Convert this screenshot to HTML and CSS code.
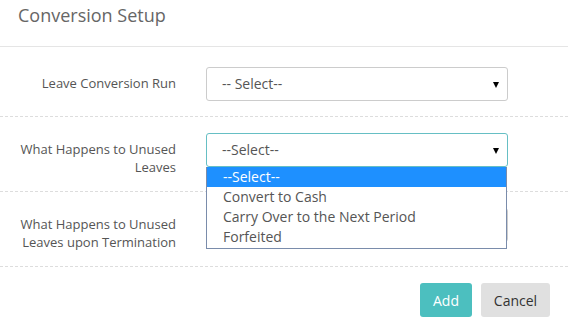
FILE: index.html
```html
<!DOCTYPE html>
<html lang="en">
<head>
    <meta charset="UTF-8">
    <meta name="viewport" content="width=device-width, initial-scale=1.0">
    <title>Conversion Setup</title>
    <link rel="stylesheet" href="styles.css">
</head>
<body>
    <div class="modal">
        <div class="modal-header">
            <h3>Conversion Setup</h3>
        </div>
        <div class="modal-body">
            <div class="form-row">
                <label class="control-label">Leave Conversion Run</label>
                <div class="control">
                    <div class="select">-- Select--<span class="caret"></span></div>
                </div>
            </div>
            <div class="form-row">
                <label class="control-label">What Happens to Unused Leaves</label>
                <div class="control">
                    <div class="select focused">--Select--<span class="caret"></span></div>
                    <ul class="dropdown">
                        <li class="active">--Select--</li>
                        <li>Convert to Cash</li>
                        <li>Carry Over to the Next Period</li>
                        <li>Forfeited</li>
                    </ul>
                </div>
            </div>
            <div class="form-row">
                <label class="control-label">What Happens to Unused Leaves upon Termination</label>
                <div class="control">
                    <!-- covered by the open dropdown above -->
                    <div class="select"><span class="caret"></span></div>
                </div>
            </div>
        </div>
        <div class="modal-footer">
            <button class="btn btn-add">Add</button>
            <button class="btn btn-cancel">Cancel</button>
        </div>
    </div>
</body>
</html>
```

FILE: styles.css
```css
body {
    margin: 0;
    background: #fff;
    font-family: "Open Sans", "Liberation Sans", sans-serif;
    color: #555;
}
.modal {
    width: 568px;
}
.modal-header {
    height: 47px;
    border-bottom: 1px solid #e5e5e5;
    padding: 0 18px;
    box-sizing: border-box;
}
.modal-header h3 {
    margin: 0;
    padding-top: 1px;
    font-size: 18px;
    font-weight: 400;
    line-height: 28px;
    color: #666;
}
.modal-body {
    padding-top: 20px;
}
.form-row {
    display: grid;
    grid-template-columns: 191px 302px;
    column-gap: 15px;
    padding: 0 0 15px;
    margin-bottom: 16px;
    border-bottom: 1px dashed #ddd;
}
.control-label {
    padding: 7px 15px 0 0;
    text-align: right;
    font-size: 13px;
    line-height: 18px;
    color: #555;
}
.control {
    position: relative;
}
.select {
    position: relative;
    height: 34px;
    box-sizing: border-box;
    border: 1px solid #ccc;
    border-radius: 3px;
    padding: 0 15px;
    font-size: 14px;
    line-height: 32px;
    color: #555;
    background: #fff;
}
.select.focused {
    border-color: #66bfc4;
}
.caret {
    position: absolute;
    right: 8px;
    top: 14px;
    width: 0;
    height: 0;
    border-left: 3px solid transparent;
    border-right: 3px solid transparent;
    border-top: 6px solid #000;
}
.dropdown {
    position: absolute;
    top: 34px;
    left: 0;
    width: 301px;
    box-sizing: border-box;
    margin: 0;
    padding: 0 0 1px;
    list-style: none;
    background: #fff;
    border: 1px solid #7a8cab;
    border-top: none;
    z-index: 2;
}
.dropdown li {
    height: 20px;
    padding-left: 16px;
    font-size: 14px;
    line-height: 20px;
    color: #555;
}
.dropdown li.active {
    background: #1e90ff;
    color: #fff;
}
.modal-footer {
    display: flex;
    justify-content: flex-end;
    gap: 9px;
    padding: 0 18px;
}
.btn {
    height: 34px;
    border: none;
    border-radius: 3px;
    padding: 0 12px;
    font-family: "Open Sans", "Liberation Sans", sans-serif;
    font-size: 14px;
    cursor: pointer;
}
.btn-add {
    width: 52px;
    background: #4cbfbf;
    color: #fff;
}
.btn-cancel {
    width: 69px;
    background: #e0e0e0;
    color: #333;
}
```
